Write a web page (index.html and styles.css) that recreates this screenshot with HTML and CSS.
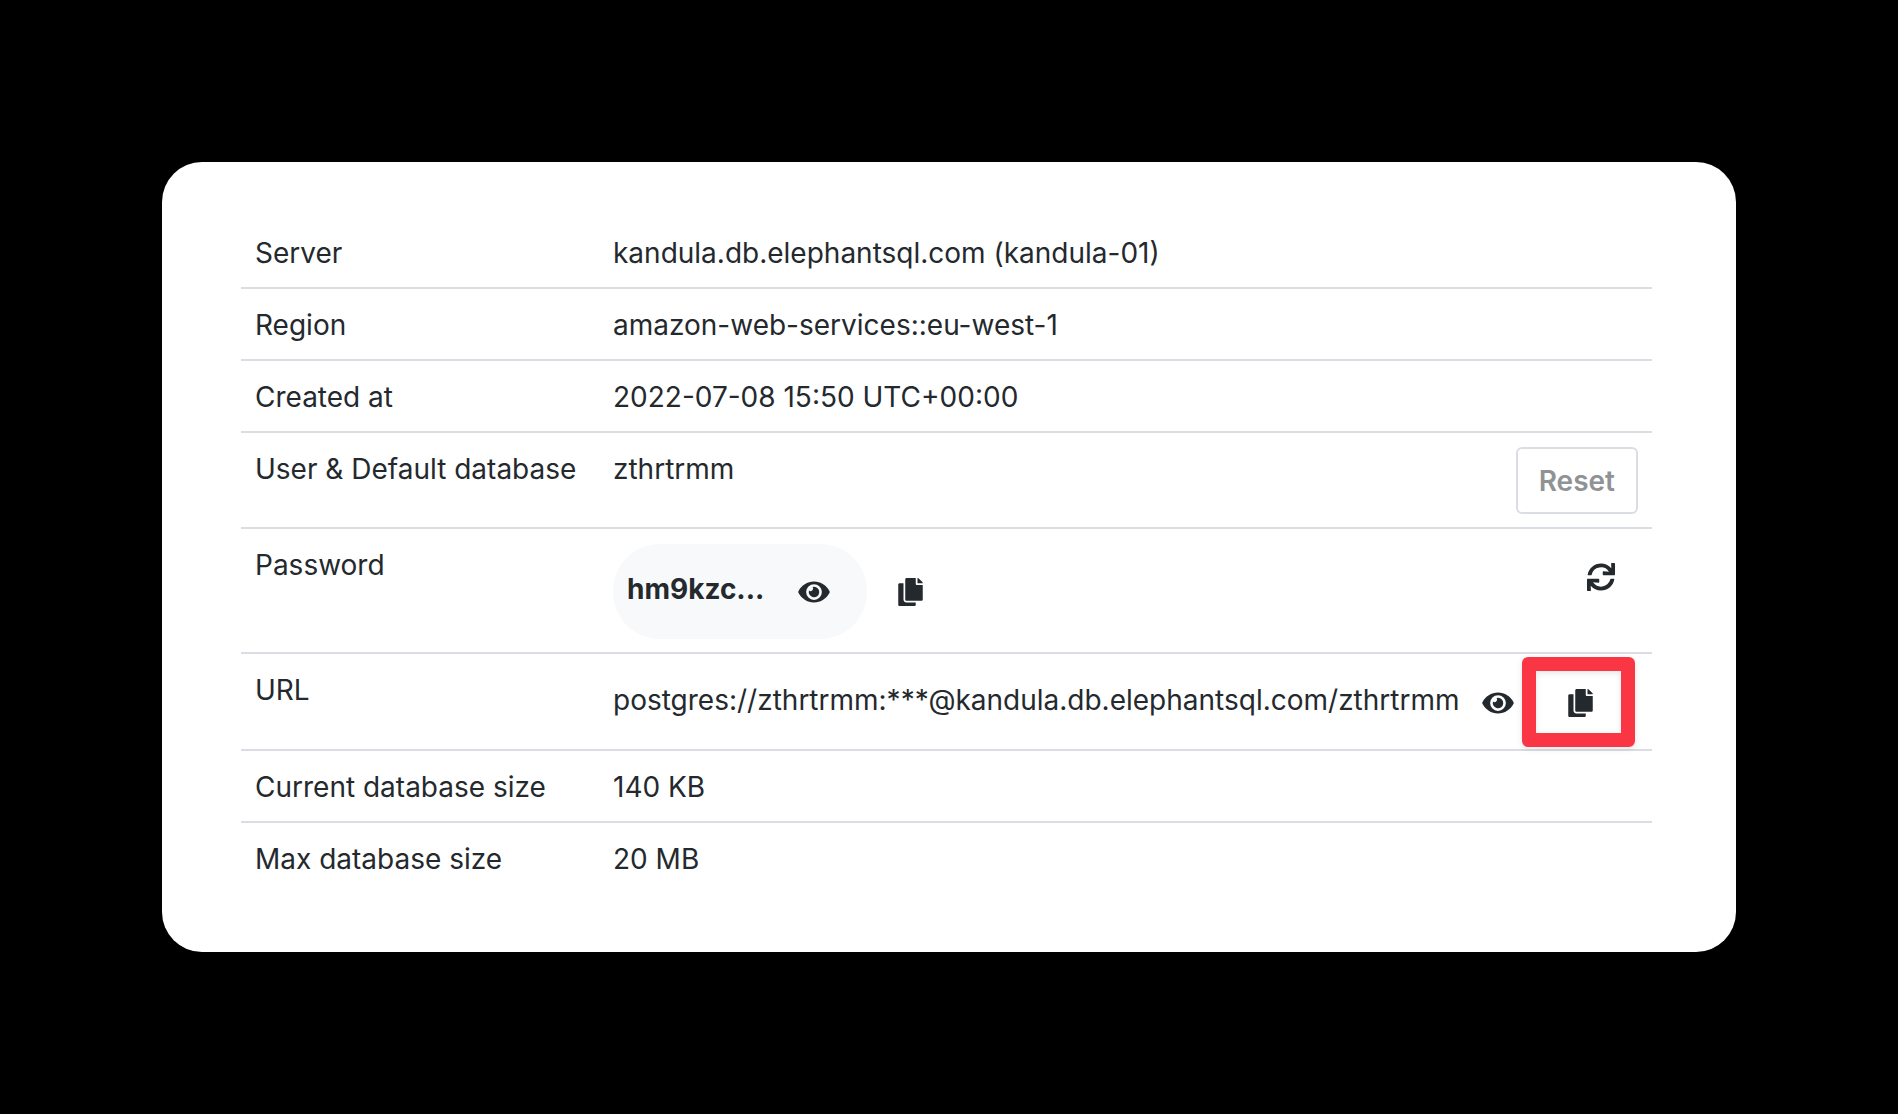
FILE: index.html
```html
<!DOCTYPE html>
<html lang="en">
<head>
<meta charset="utf-8">
<meta name="viewport" content="width=device-width, initial-scale=1">
<title>Instance details</title>
<link rel="stylesheet" href="styles.css">
</head>
<body>
<svg class="sprite" aria-hidden="true">
  <symbol id="eye" viewBox="0 0 576 512"><path d="M572.52 241.4C518.29 135.59 410.93 64 288 64S57.68 135.64 3.48 241.41a32.35 32.35 0 0 0 0 29.19C57.71 376.41 165.07 448 288 448s230.32-71.64 284.52-177.41a32.35 32.35 0 0 0 0-29.19zM288 400a144 144 0 1 1 144-144 143.93 143.93 0 0 1-144 144zm0-240a95.31 95.31 0 0 0-25.31 3.79 47.85 47.85 0 0 1-66.9 66.9A95.78 95.78 0 1 0 288 160z"/></symbol>
  <symbol id="copy" viewBox="0 0 448 512"><path d="M320 448v40c0 13.255-10.745 24-24 24H24c-13.255 0-24-10.745-24-24V120c0-13.255 10.745-24 24-24h72v296c0 30.879 25.121 56 56 56h168zm0-344V0H152c-13.255 0-24 10.745-24 24v368c0 13.255 10.745 24 24 24h272c13.255 0 24-10.745 24-24V128H344c-13.2 0-24-10.8-24-24zm120.971-31.029L375.029 7.029A24 24 0 0 0 358.059 0H352v96h96v-6.059a24 24 0 0 0-7.029-16.97z"/></symbol>
  <symbol id="sync" viewBox="0 0 512 512"><path d="M440.65 12.57l4 82.77A247.16 247.16 0 0 0 255.83 8C134.73 8 33.91 94.92 12.29 209.82A12 12 0 0 0 24.09 224h49.05a12 12 0 0 0 11.67-9.26 175.91 175.91 0 0 1 317-56.94l-101.46-4.86a12 12 0 0 0-12.57 12v47.41a12 12 0 0 0 12 12H500a12 12 0 0 0 12-12V12a12 12 0 0 0-12-12h-47.37a12 12 0 0 0-11.98 12.57zM255.83 432a175.61 175.61 0 0 1-146-77.8l101.8 4.87a12 12 0 0 0 12.57-12v-47.4a12 12 0 0 0-12-12H12a12 12 0 0 0-12 12V500a12 12 0 0 0 12 12h47.35a12 12 0 0 0 12-12.6l-4.15-82.57A247.17 247.17 0 0 0 255.83 504c121.11 0 221.93-86.92 243.55-201.82a12 12 0 0 0-11.8-14.18h-49.05a12 12 0 0 0-11.67 9.26A175.86 175.86 0 0 1 255.83 432z"/></symbol>
</svg>
<main class="card">
  <table class="details">
    <tbody>
      <tr><th scope="row">Server</th><td colspan="2">kandula.db.elephantsql.com (kandula-01)</td></tr>
      <tr><th scope="row">Region</th><td colspan="2">amazon-web-services::eu-west-1</td></tr>
      <tr><th scope="row">Created at</th><td colspan="2">2022-07-08 15:50 UTC+00:00</td></tr>
      <tr>
        <th scope="row">User &amp; Default database</th>
        <td>zthrtrmm</td>
        <td class="actions"><button type="button" class="reset">Reset</button></td>
      </tr>
      <tr>
        <th scope="row">Password</th>
        <td>
          <div class="value">
            <span class="pill"><strong class="secret">hm9kzc...</strong><button type="button" class="icon-button" aria-label="Show password"><svg class="icon icon-eye"><use href="#eye"/></svg></button></span>
            <button type="button" class="icon-button" aria-label="Copy password"><svg class="icon icon-copy"><use href="#copy"/></svg></button>
          </div>
        </td>
        <td class="actions"><button type="button" class="icon-button rotate" aria-label="Rotate password"><svg class="icon icon-sync"><use href="#sync"/></svg></button></td>
      </tr>
      <tr>
        <th scope="row">URL</th>
        <td colspan="2">
          <div class="value">
            <span class="url">postgres://zthrtrmm:***@kandula.db.elephantsql.com/zthrtrmm</span>
            <div class="url-actions">
              <button type="button" class="icon-button" aria-label="Show URL"><svg class="icon icon-eye"><use href="#eye"/></svg></button><button type="button" class="icon-button highlighted" aria-label="Copy URL"><svg class="icon icon-copy"><use href="#copy"/></svg></button>
            </div>
          </div>
        </td>
      </tr>
      <tr><th scope="row">Current database size</th><td colspan="2">140 KB</td></tr>
      <tr><th scope="row">Max database size</th><td colspan="2">20 MB</td></tr>
    </tbody>
  </table>
</main>
</body>
</html>
```
FILE: styles.css
```css
* {
  box-sizing: border-box;
}

body {
  margin: 0;
  padding: 162px;
  background: #000;
  color: #24292e;
  font: 28px/42px Inter, "Liberation Sans", sans-serif;
}

.sprite {
  display: none;
}

.card {
  padding: 55px 84px 59px 79px;
  border-radius: 40px;
  background: #fff;
}

.details {
  width: 100%;
  border-collapse: separate;
  border-spacing: 0;
}

.details th,
.details td {
  padding: 15px 14px 13px;
  border-top: 2px solid #dadee3;
  text-align: left;
  vertical-align: top;
}

.details tr:first-child > * {
  border-top: 0;
}

.details th {
  width: 358px;
  font-weight: 400;
  white-space: nowrap;
}

.details .actions {
  padding: 14px 14px 13px;
  text-align: right;
}

.value,
.pill,
.url-actions {
  display: flex;
  align-items: center;
}

.value {
  gap: 2px;
}

.pill {
  height: 95px;
  padding: 0 12px 0 14px;
  border-radius: 47px;
  background: #f8f9fa;
}

.secret {
  width: 146px;
  padding-bottom: 6px;
  font-weight: 700;
}

.url {
  flex: 0 1 842px;
  min-width: 0;
  padding-bottom: 6px;
  white-space: nowrap;
}

button {
  border: 0;
  background: none;
  color: inherit;
  font: inherit;
  cursor: pointer;
}

.reset {
  height: 67px;
  padding: 0 21px;
  border: 2px solid #dadee3;
  border-radius: 6px;
  color: #8f9396;
  font-weight: 600;
  vertical-align: top;
}

.icon-button {
  display: inline-flex;
  align-items: center;
  justify-content: center;
  width: 82px;
  height: 67px;
  padding: 0;
  vertical-align: top;
}

.rotate {
  width: 74px;
}

.highlighted {
  position: relative;
}

.highlighted::after {
  content: "";
  position: absolute;
  inset: -12px -14px -11px -17px;
  border: 14px solid #fb3644;
  border-radius: 6px;
  box-shadow: 0 2px 6px rgba(0, 0, 0, 0.1), inset 0 2px 6px rgba(0, 0, 0, 0.1);
}

.icon {
  height: 28px;
  fill: currentColor;
}

.icon-eye {
  width: 32px;
}

.icon-copy {
  width: 25px;
}

.icon-sync {
  width: 28px;
}
```
